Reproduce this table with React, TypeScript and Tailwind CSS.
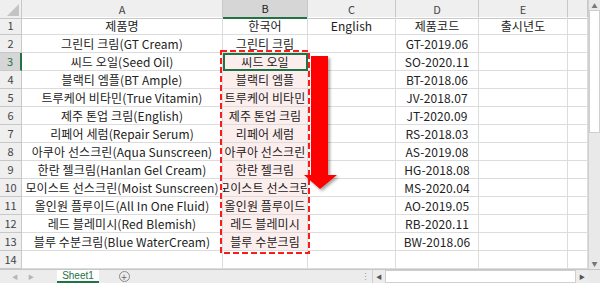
import React from 'react';

const rows: string[][] = [
  ['제품명', '한국어', 'English', '제품코드', '출시년도'],
  ['그린티 크림(GT Cream)', '그린티 크림', '', 'GT-2019.06', ''],
  ['씨드 오일(Seed Oil)', '씨드 오일', '', 'SO-2020.11', ''],
  ['블랙티 엠플(BT Ample)', '블랙티 엠플', '', 'BT-2018.06', ''],
  ['트루케어 비타민(True Vitamin)', '트루케어 비타민', '', 'JV-2018.07', ''],
  ['제주 톤업 크림(English)', '제주 톤업 크림', '', 'JT-2020.09', ''],
  ['리페어 세럼(Repair Serum)', '리페어 세럼', '', 'RS-2018.03', ''],
  ['아쿠아 선스크린(Aqua Sunscreen)', '아쿠아 선스크린', '', 'AS-2019.08', ''],
  ['한란 젤크림(Hanlan Gel Cream)', '한란 젤크림', '', 'HG-2018.08', ''],
  ['모이스트 선스크린(Moist Sunscreen)', '모이스트 선스크린', '', 'MS-2020.04', ''],
  ['올인원 플루이드(All In One Fluid)', '올인원 플루이드', '', 'AO-2019.05', ''],
  ['레드 블레미시(Red Blemish)', '레드 블레미시', '', 'RB-2020.11', ''],
  ['블루 수분크림(Blue WaterCream)', '블루 수분크림', '', 'BW-2018.06', ''],
  ['', '', '', '', ''],
];

const cols = 'grid grid-cols-[22px_201px_85px_88px_83px_89px_20px]';
const cell = 'flex items-center justify-center overflow-hidden whitespace-nowrap border-r border-b border-[#dcdcdc]';

function App() {
  return (
    <div className="w-[600px] h-[283px] overflow-hidden bg-white flex flex-col font-['Noto_Sans_CJK_KR','Noto_Sans',sans-serif] text-[12px] tracking-[0.1px] text-[#222]">
      <div className="flex h-[269px]">
        {/* sheet grid */}
        <div className="relative w-[588px] flex flex-col">
          {/* column headers */}
          <div className={`${cols} h-[17px] bg-[#efefef] text-[#444] text-[11px] tracking-normal`}>
            <div className="relative border-r border-b border-[#c8c8c8]">
              <div className="absolute right-[2px] bottom-[2px] w-0 h-0 border-l-[12px] border-l-transparent border-b-[12px] border-b-[#c4c4c4]" />
            </div>
            {['A', 'B', 'C', 'D', 'E', ''].map((c) => (
              <div
                key={c || 'F'}
                className={
                  c === 'B'
                    ? 'flex items-center justify-center border-r border-[#c8c8c8] bg-[#d6d6d6] border-b-2 border-b-[#217346] text-[#222]'
                    : 'flex items-center justify-center border-r border-b border-[#c8c8c8]'
                }
              >
                {c}
              </div>
            ))}
          </div>

          {rows.map((r, i) => {
            const n = i + 1;
            const sel = n === 3;
            return (
              <div key={n} className={`${cols} h-[18px]`}>
                <div
                  className={
                    sel
                      ? 'flex items-center justify-center border-b border-[#c8c8c8] bg-[#d6d6d6] border-r-2 border-r-[#217346] text-[#217346] text-[11px] tracking-normal'
                      : 'flex items-center justify-center border-r border-b border-[#c8c8c8] bg-[#efefef] text-[#444] text-[11px] tracking-normal'
                  }
                >
                  {n}
                </div>
                {r.map((v, j) => {
                  const pink = j === 1 && n >= 3 && n <= 13;
                  return (
                    <div
                      key={j}
                      className={`${cell} ${pink ? 'bg-[#fdeeee]' : ''} ${
                        sel && j === 1 ? 'outline-2 outline-[#217346] -outline-offset-2' : ''
                      }`}
                    >
                      {v}
                    </div>
                  );
                })}
                <div className={cell} />
              </div>
            );
          })}

          {/* annotation: dashed selection + arrow */}
          <svg className="absolute left-0 top-0 pointer-events-none" width="588" height="269">
            <rect
              x="221"
              y="51"
              width="88"
              height="202"
              fill="none"
              stroke="#ff1a1a"
              strokeWidth="2"
              strokeDasharray="6 3"
            />
            <g style={{ filter: 'drop-shadow(2px 2px 1.5px rgba(0,0,0,0.35))' }}>
              <polygon points="311,56 328,56 328,175 337,175 320,189 304,175 311,175" fill="#ff0000" />
            </g>
          </svg>
        </div>

        {/* vertical scrollbar */}
        <div className="w-[12px] flex flex-col bg-[#e9e9e9] border-l border-[#d0d0d0]">
          <div className="h-[10px] flex items-center justify-center text-[6px] text-[#777]">▲</div>
          <div className="h-[123px] bg-white border border-[#cfcfcf]" />
          <div className="flex-1" />
          <div className="h-[12px] flex items-center justify-center text-[6px] text-[#777]">▼</div>
        </div>
      </div>

      {/* sheet tab bar */}
      <div className="h-[14px] flex items-stretch bg-[#ececec] border-t border-[#c6c6c6] text-[#999] tracking-normal">
        <div className="w-[57px] flex items-center gap-[10px] pl-[12px] text-[6px] text-[#b5b5b5]">
          <span>◀</span>
          <span>▶</span>
        </div>
        <div className="w-[42px] flex items-center justify-center bg-white text-[#217346] text-[10px] border-b-2 border-[#217346] font-['Liberation_Sans',sans-serif]">
          Sheet1
        </div>
        <div className="w-[50px] flex items-center justify-center">
          <div className="w-[11px] h-[11px] rounded-full border border-[#8a8a8a] flex items-center justify-center text-[10px] leading-none text-[#666]">
            +
          </div>
        </div>
        <div className="flex-1" />
        <div className="w-[14px] flex items-center justify-center text-[9px] text-[#999]">⋮</div>
        <div className="w-[216px] flex items-stretch border-l border-[#cfcfcf]">
          <div className="w-[12px] flex items-center justify-center text-[6px] text-[#555]">◀</div>
          <div className="flex-1 bg-white border border-[#cfcfcf]" />
          <div className="w-[12px] flex items-center justify-center text-[6px] text-[#555]">▶</div>
        </div>
        <div className="w-[12px] bg-[#e9e9e9]" />
      </div>
    </div>
  );
}

export default App;
